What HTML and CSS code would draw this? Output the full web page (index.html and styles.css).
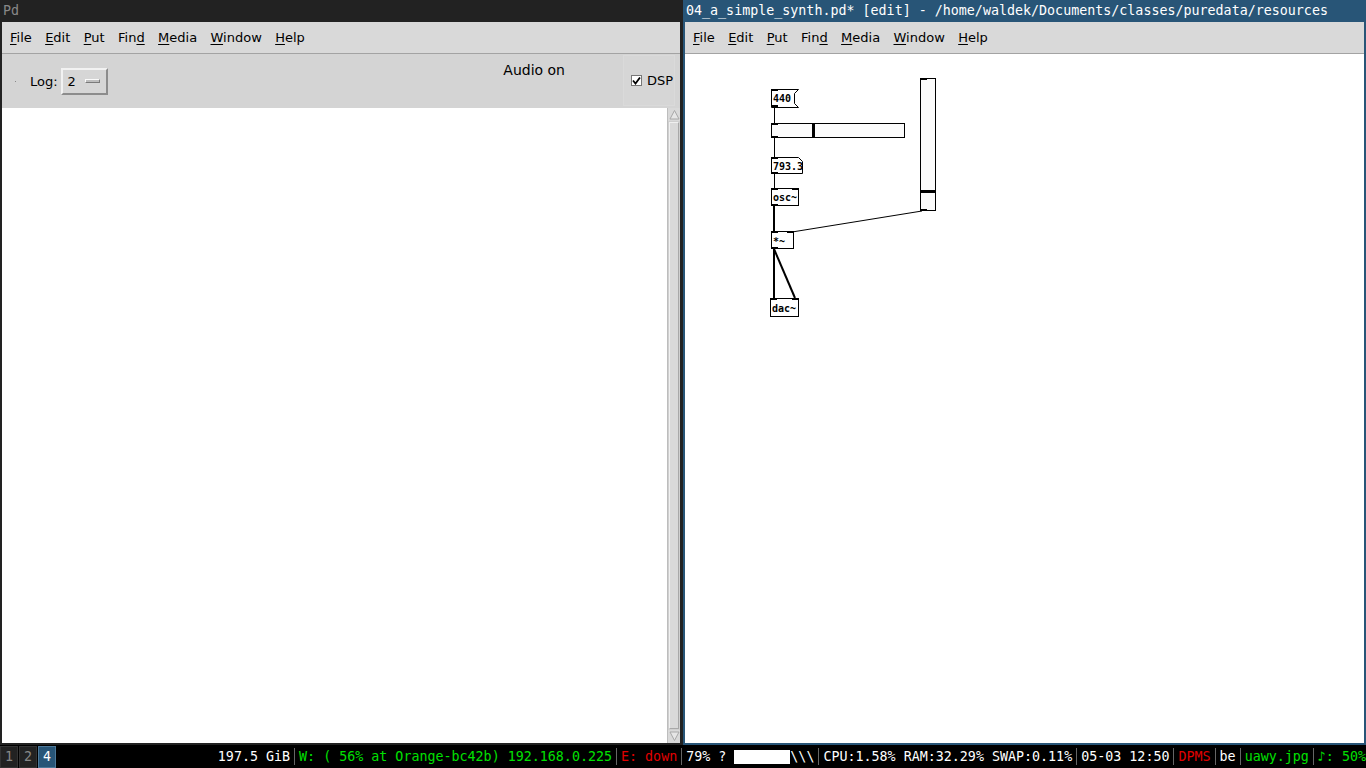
FILE: index.html
```html
<!DOCTYPE html>
<html>
<head>
<meta charset="utf-8">
<title>Pd</title>
<link rel="stylesheet" href="styles.css">
</head>
<body>
<div class="screen">
  <div class="windows">
    <section class="win win-pd">
      <header class="title">Pd</header>
      <div class="client">
        <nav class="menubar">
          <span class="mi"><u>F</u>ile</span>
          <span class="mi"><u>E</u>dit</span>
          <span class="mi"><u>P</u>ut</span>
          <span class="mi">Fin<u>d</u></span>
          <span class="mi"><u>M</u>edia</span>
          <span class="mi"><u>W</u>indow</span>
          <span class="mi"><u>H</u>elp</span>
        </nav>
        <div class="toolbar">
          <span class="busy"></span>
          <span class="log-label">Log:</span>
          <span class="mbtn"><span class="mbtn-val">2</span><span class="mbtn-ind"></span></span>
          <span class="audio">Audio on</span>
          <span class="dspframe">
            <span class="chk"><svg width="9" height="9" viewBox="0 0 9 9"><path d="M1 4.5 L3.5 7.5 L8 1.5" fill="none" stroke="#000" stroke-width="1.8"/></svg></span>
            <span class="dsp-label">DSP</span>
          </span>
        </div>
        <div class="logarea">
          <div class="logtext"></div>
          <div class="vscroll">
            <span class="sarrow"><svg width="11" height="11" viewBox="0 0 11 11"><path d="M5.5 1.5 L10 10 L1 10 Z" fill="#e6e6e6" stroke="#a8a8a8"/></svg></span>
            <span class="thumb"></span>
            <span class="sarrow"><svg width="11" height="11" viewBox="0 0 11 11"><path d="M5.5 9.5 L10 1 L1 1 Z" fill="#e6e6e6" stroke="#a8a8a8"/></svg></span>
          </div>
        </div>
      </div>
    </section>
    <section class="win win-patch">
      <header class="title">04_a_simple_synth.pd* [edit] - /home/waldek/Documents/classes/puredata/resources</header>
      <div class="client">
        <nav class="menubar">
          <span class="mi"><u>F</u>ile</span>
          <span class="mi"><u>E</u>dit</span>
          <span class="mi"><u>P</u>ut</span>
          <span class="mi">Fin<u>d</u></span>
          <span class="mi"><u>M</u>edia</span>
          <span class="mi"><u>W</u>indow</span>
          <span class="mi"><u>H</u>elp</span>
        </nav>
        <div class="canvas">
          <svg class="patch" width="679" height="689" viewBox="685 54 679 689">
            <g fill="none" stroke="#000">
              <line x1="774.5" y1="107" x2="774.5" y2="123"/>
              <line x1="774.5" y1="138" x2="774.5" y2="157"/>
              <line x1="774.5" y1="174" x2="774.5" y2="188"/>
              <line x1="774" y1="206" x2="774" y2="232" stroke-width="2"/>
              <line x1="922" y1="211" x2="792" y2="232"/>
              <line x1="774" y1="249" x2="774" y2="298" stroke-width="2"/>
              <line x1="774" y1="249" x2="795" y2="298" stroke-width="2"/>
            </g>
            <!-- message 440 -->
            <polygon points="771.5,89.5 798.5,89.5 794.5,93.5 794.5,103.5 798.5,107.5 771.5,107.5" fill="#fff" stroke="#000"/>
            <rect x="771" y="89" width="7" height="2"/>
            <rect x="771" y="105" width="7" height="2"/>
            <text class="obj" x="773" y="102">440</text>
            <!-- hslider -->
            <rect x="771.5" y="123.5" width="133" height="14" fill="#fbfbfb" stroke="#000"/>
            <rect x="771" y="123" width="7" height="2"/>
            <rect x="771" y="136" width="7" height="2"/>
            <rect x="812" y="124" width="3" height="13"/>
            <!-- number box -->
            <polygon points="771.5,157.5 798.5,157.5 802.5,161.5 802.5,173.5 771.5,173.5" fill="#fff" stroke="#000"/>
            <rect x="771" y="157" width="7" height="2"/>
            <rect x="771" y="172" width="7" height="2"/>
            <text class="obj" x="773" y="170">793.3</text>
            <!-- osc~ -->
            <rect x="771.5" y="188.5" width="27" height="17" fill="#fff" stroke="#000"/>
            <rect x="771" y="188" width="7" height="2"/>
            <rect x="792" y="188" width="7" height="2"/>
            <rect x="771" y="204" width="7" height="2"/>
            <text class="obj" x="773" y="201">osc~</text>
            <!-- *~ -->
            <rect x="771.5" y="231.5" width="22" height="17" fill="#fff" stroke="#000"/>
            <rect x="771" y="231" width="7" height="2"/>
            <rect x="787" y="231" width="7" height="2"/>
            <rect x="771" y="247" width="7" height="2"/>
            <text class="obj" x="773" y="245">*~</text>
            <!-- dac~ -->
            <rect x="770.5" y="298.5" width="28" height="18" fill="#fff" stroke="#000"/>
            <rect x="770" y="298" width="7" height="2"/>
            <rect x="792" y="298" width="7" height="2"/>
            <text class="obj" x="772" y="312">dac~</text>
            <!-- vslider -->
            <rect x="920.5" y="78.5" width="15" height="132" fill="#fbfbfb" stroke="#000"/>
            <rect x="920" y="78" width="7" height="2"/>
            <rect x="920" y="209" width="7" height="2"/>
            <rect x="921" y="190" width="14" height="3"/>
          </svg>
        </div>
      </div>
    </section>
  </div>
  <footer class="bar">
    <div class="workspaces">
      <span class="ws">1</span>
      <span class="ws">2</span>
      <span class="ws ws-focus">4</span>
    </div>
    <div class="status">
      <span class="blk">197.5 GiB</span>
      <span class="blk good">W: ( 56% at Orange-bc42b) 192.168.0.225</span>
      <span class="blk bad">E: down</span>
      <span class="blk">79% ? <span class="meter"></span>\\\</span>
      <span class="blk">CPU:1.58% RAM:32.29% SWAP:0.11%</span>
      <span class="blk">05-03 12:50</span>
      <span class="blk bad">DPMS</span>
      <span class="blk">be</span>
      <span class="blk good">uawy.jpg</span>
      <span class="blk good">♪: 50%</span>
    </div>
  </footer>
</div>
</body>
</html>
```
FILE: styles.css
```css
html, body {
  margin: 0;
  padding: 0;
}
body {
  width: 1366px;
  height: 768px;
  overflow: hidden;
  background: #000;
  font-family: "DejaVu Sans", "Liberation Sans", sans-serif;
  color: #000;
}
.screen {
  display: flex;
  flex-direction: column;
  height: 768px;
}
.windows {
  display: flex;
  height: 745px;
}
.win {
  display: flex;
  flex-direction: column;
  width: 683px;
  min-width: 0;
}
.title {
  height: 22px;
  line-height: 22px;
  font-family: "DejaVu Sans Mono", monospace;
  font-size: 13.33px;
  white-space: nowrap;
  overflow: hidden;
  flex: none;
}
.win-pd .title {
  background: #222;
  color: #888;
  padding-left: 3px;
}
.win-patch .title {
  background: #285577;
  color: #fff;
  padding-left: 3px;
}
.client {
  flex: 1;
  display: flex;
  flex-direction: column;
  min-height: 0;
}
.win-pd .client {
  border-style: solid;
  border-color: #222;
  border-width: 0 3px 2px 2px;
}
.win-patch .client {
  border-style: solid;
  border-color: #285577;
  border-width: 0 2px 2px 2px;
}
.menubar {
  height: 31px;
  border-bottom: 1px solid #a3a3a3;
  background: #d9d9d9;
  display: flex;
  align-items: center;
  font-size: 13px;
  padding-left: 1.3px;
  flex: none;
}
.mi {
  padding: 0 6.7px;
  line-height: 31px;
  white-space: nowrap;
}
.mi u {
  text-decoration: underline;
  text-underline-offset: 2px;
}
.toolbar {
  height: 54px;
  background: #d4d4d4;
  display: flex;
  align-items: center;
  flex: none;
  font-size: 13px;
}
.busy {
  width: 1px;
  height: 1px;
  background: #8a8a8a;
  margin-left: 13px;
}
.log-label {
  margin-left: 14px;
}
.mbtn {
  margin-left: 3px;
  width: 43px;
  height: 23px;
  border: 2px solid;
  border-color: #f2f2f2 #8c8c8c #8c8c8c #f2f2f2;
  background: #d6d6d6;
  display: flex;
  align-items: center;
}
.mbtn-val {
  margin-left: 5px;
}
.mbtn-ind {
  margin-left: 9px;
  width: 13px;
  height: 2px;
  border: 1px solid;
  border-color: #fafafa #7a7a7a #7a7a7a #fafafa;
  background: #bdbdbd;
}
.audio {
  margin-left: auto;
  margin-right: 58px;
  align-self: flex-start;
  margin-top: 8px;
  font-size: 14px;
}
.dspframe {
  align-self: stretch;
  margin: 1px 5px 2px 0;
  width: 52px;
  border: 1px solid #dadada;
  background: #d6d6d6;
  display: flex;
  align-items: center;
  box-sizing: border-box;
}
.chk {
  margin-left: 7px;
  width: 9px;
  height: 9px;
  border: 1px solid #777;
  background: #fff;
  display: flex;
  align-items: center;
  justify-content: center;
}
.chk svg {
  display: block;
}
.dsp-label {
  margin-left: 5px;
}
.logarea {
  flex: 1;
  display: flex;
  background: #fff;
  min-height: 0;
}
.logtext {
  flex: 1;
}
.vscroll {
  width: 13px;
  background: #cfcfcf;
  display: flex;
  flex-direction: column;
  box-sizing: border-box;
  border-left: 1px solid #bdbdbd;
}
.sarrow {
  height: 13px;
  flex: none;
  display: flex;
  align-items: center;
  justify-content: center;
  background: #d9d9d9;
}
.sarrow svg {
  display: block;
}
.thumb {
  flex: 1;
  margin: 1px 1px;
  background: #d9d9d9;
  border: 1px solid;
  border-color: #f0f0f0 #a8a8a8 #a8a8a8 #f0f0f0;
}
.canvas {
  flex: 1;
  background: #fff;
  min-height: 0;
  overflow: hidden;
}
.patch {
  display: block;
}
.obj {
  font-family: "DejaVu Sans Mono", monospace;
  font-weight: bold;
  font-size: 10px;
  fill: #000;
}
.bar {
  height: 23px;
  display: flex;
  background: #000;
  font-family: "DejaVu Sans Mono", monospace;
  font-size: 13.33px;
  color: #fff;
}
.workspaces {
  display: flex;
  align-items: flex-end;
}
.ws {
  width: 16px;
  height: 20px;
  line-height: 20px;
  border: 1px solid #333;
  background: #222;
  color: #888;
  text-align: center;
  margin-right: 1px;
}
.ws-focus {
  background: #285577;
  border-color: #4c7899;
  color: #fff;
}
.status {
  margin-left: auto;
  display: flex;
  align-items: center;
  line-height: 23px;
}
.blk {
  white-space: pre;
  padding-left: 4px;
  margin-left: 4px;
  border-left: 1px solid #666;
  line-height: 17px;
  display: flex;
  align-items: center;
}
.blk:first-child {
  border-left: none;
  padding-left: 0;
  margin-left: 0;
}
.good {
  color: #00e000;
}
.bad {
  color: #e00000;
}
.meter {
  display: inline-block;
  width: 56px;
  height: 14px;
  background: #fff;
}
```
